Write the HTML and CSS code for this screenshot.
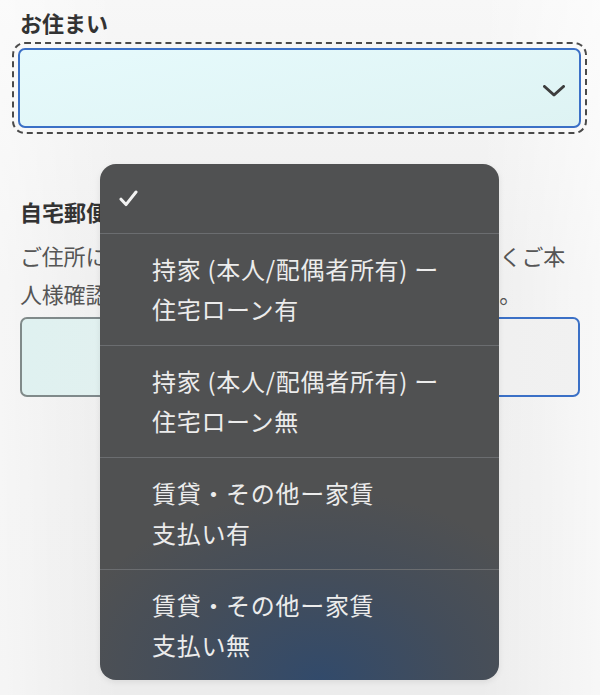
FILE: index.html
```html
<!DOCTYPE html>
<html lang="ja">
<head>
<meta charset="utf-8">
<title>お住まい</title>
<link rel="stylesheet" href="styles.css">
</head>
<body>
<main class="form">
  <div class="field">
    <label class="label">お住まい</label>
    <div class="select">
      <svg class="chevron" width="22" height="12" viewBox="0 0 22 12"><path d="M1.5 1.5 L11 10 L20.5 1.5" fill="none" stroke="#3d3d3d" stroke-width="3" stroke-linecap="round" stroke-linejoin="round"/></svg>
    </div>
  </div>
  <div class="field field-zip">
    <label class="label">自宅郵便番号</label>
    <p class="desc">ご住所に変更がある場合は、変更後の住所を正しくご本人様確認書類の記載内容どおりにご入力ください。</p>
    <div class="input"></div>
  </div>

  <ul class="picker">
    <li class="opt opt-selected">
      <svg class="check" width="19" height="17" viewBox="0 0 19 17"><path d="M2 9.2 L7 14.6 L17 2" fill="none" stroke="#f2f2f2" stroke-width="3" stroke-linecap="round" stroke-linejoin="round"/></svg>
    </li>
    <li class="opt">持家 (本人/配偶者所有) ー<br>住宅ローン有</li>
    <li class="opt">持家 (本人/配偶者所有) ー<br>住宅ローン無</li>
    <li class="opt">賃貸・その他ー家賃<br>支払い有</li>
    <li class="opt">賃貸・その他ー家賃<br>支払い無</li>
  </ul>
</main>
</body>
</html>
```

FILE: styles.css
```css
* { box-sizing: border-box; }
html, body { margin: 0; padding: 0; }
body {
  width: 600px;
  height: 695px;
  overflow: hidden;
  font-family: "Noto Sans CJK JP", "Noto Sans", sans-serif;
  background:
    linear-gradient(90deg, rgba(255,255,255,0.5) 0%, rgba(255,255,255,0) 20%, rgba(255,255,255,0) 80%, rgba(255,255,255,0.6) 100%),
    linear-gradient(180deg, #f7f7f7 0%, #eeeeee 40%, #ececec 100%);
}
.form {
  position: relative;
  padding: 6px 20px 0 20px;
  height: 695px;
}
.label {
  display: block;
  font-size: 22px;
  line-height: 32px;
  font-weight: 700;
  color: #333333;
}
.select {
  margin-top: 10px;
  margin-left: -2px;
  margin-right: -1px;
  height: 80px;
  border: 2px solid #3b70c6;
  border-radius: 7px;
  background: linear-gradient(170deg, #e6fafc 0%, #def3f3 100%);
  outline: 2px dashed #4a4a4a;
  outline-offset: 4px;
  display: flex;
  align-items: center;
  justify-content: flex-end;
  padding-right: 14px;
}
.chevron { display: block; margin-top: 6px; }
.field-zip { margin-top: 67px; }
.desc {
  margin: 9px 0 0 0;
  font-size: 22px;
  letter-spacing: -0.2px;
  line-height: 38px;
  color: #555555;
}
.input {
  margin-top: 5px;
  height: 80px;
  border: 2px solid transparent;
  border-radius: 7px;
  background:
    linear-gradient(90deg, #dff1f0 0%, #e6f0ef 40%, #efefef 75%, #f1f1f1 100%) padding-box,
    linear-gradient(90deg, #808a89 0%, #7d8790 40%, #3b70c6 80%, #3b70c6 100%) border-box;
}
.picker {
  position: absolute;
  left: 100px;
  top: 164px;
  width: 399px;
  height: 516px;
  margin: 0;
  padding: 0;
  list-style: none;
  border-radius: 16px;
  overflow: hidden;
  background:
    radial-gradient(ellipse 260px 190px at 55% 100%, rgba(40,72,115,0.75) 0%, rgba(45,70,105,0.35) 55%, rgba(60,70,85,0) 100%),
    #505152;
  box-shadow: 0 2px 6px rgba(0,0,0,0.08);
}
.opt {
  height: 112px;
  padding: 15px 0 0 52px;
  font-size: 24px;
  letter-spacing: 0.7px;
  line-height: 40px;
  color: #ececec;
  border-top: 1px solid #6b6d70;
}
.opt:last-child { height: 110px; }
.opt-selected {
  height: 69px;
  border-top: none;
  padding: 0 0 0 19px;
  display: flex;
  align-items: center;
}
.check { display: block; margin-top: 0; }
```
